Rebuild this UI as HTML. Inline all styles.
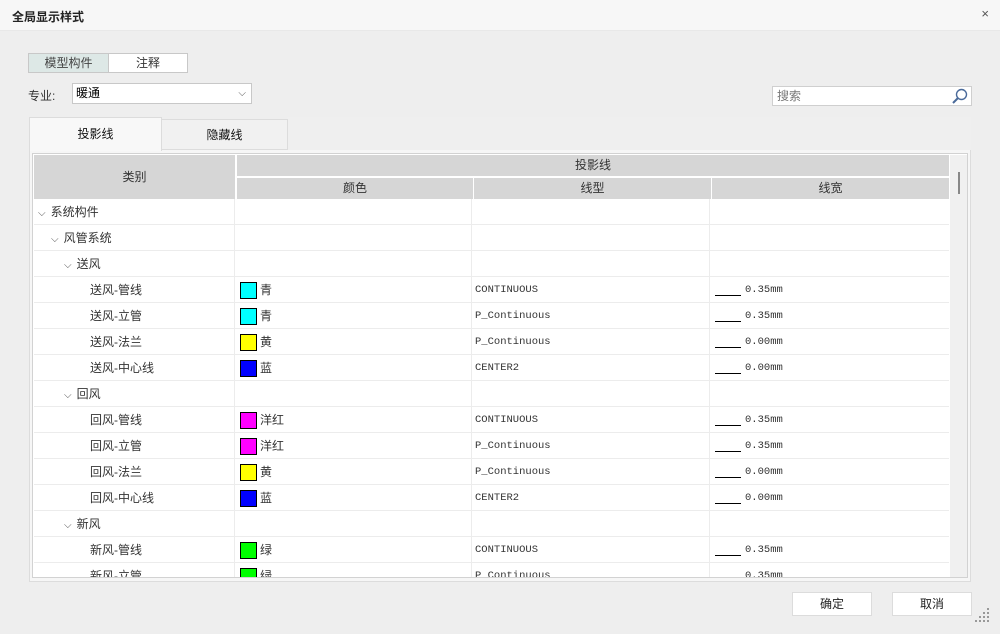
<!DOCTYPE html>
<html><head><meta charset="utf-8"><style>
*{margin:0;padding:0;box-sizing:border-box}
body{width:1000px;height:634px;overflow:hidden;background:#eeeeee;font-family:"Liberation Sans","Noto Sans CJK SC",sans-serif;font-size:12px;color:#333;position:relative}
.a{position:absolute}
.title{left:0;top:0;width:1000px;height:31px;background:#f7f7f7;border-bottom:1px solid #e8e8e8}
.row{position:absolute;left:34px;width:915px;height:26px;background:#fff;border-bottom:1px solid #ececec}
.row div{position:absolute;top:0;height:26px;line-height:26px;white-space:nowrap}
.c1{left:0;width:201px;border-right:1px solid #ececec}
.c2{left:201px;width:237px;border-right:1px solid #ececec}
.c3{left:438px;width:238px;border-right:1px solid #ececec;font-family:"Liberation Mono",monospace;font-size:10.5px;padding-left:3px}
.c4{left:676px;width:239px;font-family:"Liberation Mono",monospace;font-size:10.5px;padding-left:35px}
.c4 i{position:absolute;left:5px;top:18px;width:26px;border-top:1px solid #000}
.sw{position:absolute;left:5px;top:5px;width:17px;height:17px;border:1px solid #000}
.cn{padding-left:25px}
.chev{font-size:10px;color:#555;margin-right:5px}
.hd{position:absolute;background:#d6d6d6;text-align:center;color:#333;font-size:12px}
</style></head><body>
<div class="a title"><span class="a" style="left:12px;top:8px;font-weight:bold;font-size:12px;color:#222">全局显示样式</span><span class="a" style="right:11px;top:6px;font-size:13px;color:#555">×</span></div>
<div class="a" style="left:28px;top:53px;width:81px;height:20px;background:#dde8e6;border:1px solid #c8c8c8;text-align:center;line-height:18px;color:#444">模型构件</div>
<div class="a" style="left:108px;top:53px;width:80px;height:20px;background:#fff;border:1px solid #c8c8c8;text-align:center;line-height:18px">注释</div>
<div class="a" style="left:28px;top:87px">专业:</div>
<div class="a" style="left:72px;top:83px;width:180px;height:21px;background:#fff;border:1px solid #c8c8c8;line-height:19px;padding-left:3px;color:#000">暖通<span class="a" style="right:5px;top:0;font-size:10px;color:#555">⌵</span></div>
<div class="a" style="left:772px;top:86px;width:200px;height:20px;background:#fff;border:1px solid #cfcfcf;line-height:18px;padding-left:4px;color:#777">搜索
<svg class="a" style="right:3px;top:1px" width="17" height="17" viewBox="0 0 17 17"><circle cx="10.5" cy="6.5" r="5" fill="none" stroke="#4a6a9a" stroke-width="1.4"/><path d="M7 10 L2 15" stroke="#4a6a9a" stroke-width="2"/></svg></div>
<div class="a" style="left:29px;top:149px;width:942px;height:433px;background:#f6f6f6;border:1px solid #dcdcdc"></div>
<div class="a" style="left:287px;top:117px;width:684px;height:33px;background:#efefef"></div>
<div class="a" style="left:29px;top:117px;width:133px;height:34px;background:#f8f8f8;border:1px solid #dcdcdc;border-bottom:none;text-align:center;line-height:32px;color:#111">投影线</div>
<div class="a" style="left:161px;top:119px;width:127px;height:31px;background:#f1f1f1;border:1px solid #dcdcdc;text-align:center;line-height:30px;color:#111">隐藏线</div>
<div class="a" style="left:32px;top:153px;width:936px;height:425px;background:#fff;border:1px solid #d2d2d2;overflow:hidden">
<div class="hd" style="left:1px;top:1px;width:201px;height:44px;line-height:44px">类别</div>
<div class="hd" style="left:204px;top:1px;width:712px;height:21px;line-height:21px">投影线</div>
<div class="hd" style="left:204px;top:24px;width:236px;height:21px;line-height:21px">颜色</div>
<div class="hd" style="left:441px;top:24px;width:237px;height:21px;line-height:21px">线型</div>
<div class="hd" style="left:679px;top:24px;width:237px;height:21px;line-height:21px">线宽</div>
<div class="a" style="left:917px;top:1px;width:18px;height:423px;background:#f0f0f0"></div>
<div class="a" style="left:925px;top:18px;width:2px;height:22px;background:#888"></div>
</div>
<div class="a" style="left:0;top:0;width:1000px;height:634px;pointer-events:none">
<div style="position:absolute;left:0;top:199px;width:1000px;height:378px;overflow:hidden">
<div class="row" style="top:0"><div class="c1" style="padding-left:4px"><span class="chev">⌵</span>系统构件</div><div class="c2"></div><div class="c3"></div><div class="c4"></div></div>
<div class="row" style="top:26px"><div class="c1" style="padding-left:17px"><span class="chev">⌵</span>风管系统</div><div class="c2"></div><div class="c3"></div><div class="c4"></div></div>
<div class="row" style="top:52px"><div class="c1" style="padding-left:30px"><span class="chev">⌵</span>送风</div><div class="c2"></div><div class="c3"></div><div class="c4"></div></div>
<div class="row" style="top:78px"><div class="c1" style="padding-left:56px">送风-管线</div><div class="c2 cn"><span class="sw" style="background:#00ffff"></span>青</div><div class="c3">CONTINUOUS</div><div class="c4"><i></i>0.35mm</div></div>
<div class="row" style="top:104px"><div class="c1" style="padding-left:56px">送风-立管</div><div class="c2 cn"><span class="sw" style="background:#00ffff"></span>青</div><div class="c3">P_Continuous</div><div class="c4"><i></i>0.35mm</div></div>
<div class="row" style="top:130px"><div class="c1" style="padding-left:56px">送风-法兰</div><div class="c2 cn"><span class="sw" style="background:#ffff00"></span>黄</div><div class="c3">P_Continuous</div><div class="c4"><i></i>0.00mm</div></div>
<div class="row" style="top:156px"><div class="c1" style="padding-left:56px">送风-中心线</div><div class="c2 cn"><span class="sw" style="background:#0000ff"></span>蓝</div><div class="c3">CENTER2</div><div class="c4"><i></i>0.00mm</div></div>
<div class="row" style="top:182px"><div class="c1" style="padding-left:30px"><span class="chev">⌵</span>回风</div><div class="c2"></div><div class="c3"></div><div class="c4"></div></div>
<div class="row" style="top:208px"><div class="c1" style="padding-left:56px">回风-管线</div><div class="c2 cn"><span class="sw" style="background:#ff00ff"></span>洋红</div><div class="c3">CONTINUOUS</div><div class="c4"><i></i>0.35mm</div></div>
<div class="row" style="top:234px"><div class="c1" style="padding-left:56px">回风-立管</div><div class="c2 cn"><span class="sw" style="background:#ff00ff"></span>洋红</div><div class="c3">P_Continuous</div><div class="c4"><i></i>0.35mm</div></div>
<div class="row" style="top:260px"><div class="c1" style="padding-left:56px">回风-法兰</div><div class="c2 cn"><span class="sw" style="background:#ffff00"></span>黄</div><div class="c3">P_Continuous</div><div class="c4"><i></i>0.00mm</div></div>
<div class="row" style="top:286px"><div class="c1" style="padding-left:56px">回风-中心线</div><div class="c2 cn"><span class="sw" style="background:#0000ff"></span>蓝</div><div class="c3">CENTER2</div><div class="c4"><i></i>0.00mm</div></div>
<div class="row" style="top:312px"><div class="c1" style="padding-left:30px"><span class="chev">⌵</span>新风</div><div class="c2"></div><div class="c3"></div><div class="c4"></div></div>
<div class="row" style="top:338px"><div class="c1" style="padding-left:56px">新风-管线</div><div class="c2 cn"><span class="sw" style="background:#00ff00"></span>绿</div><div class="c3">CONTINUOUS</div><div class="c4"><i></i>0.35mm</div></div>
<div class="row" style="top:364px"><div class="c1" style="padding-left:56px">新风-立管</div><div class="c2 cn"><span class="sw" style="background:#00ff00"></span>绿</div><div class="c3">P_Continuous</div><div class="c4"><i></i>0.35mm</div></div>
</div></div>
<div class="a" style="left:792px;top:592px;width:80px;height:24px;background:#fff;border:1px solid #dcdcdc;text-align:center;line-height:22px;color:#222">确定</div>
<div class="a" style="left:892px;top:592px;width:80px;height:24px;background:#fff;border:1px solid #dcdcdc;text-align:center;line-height:22px;color:#222">取消</div>
<svg class="a" style="left:975px;top:606px" width="16" height="20" viewBox="0 0 16 20"><g fill="#999"><rect x="12" y="2" width="2" height="2"/><rect x="8" y="6" width="2" height="2"/><rect x="12" y="6" width="2" height="2"/><rect x="4" y="10" width="2" height="2"/><rect x="8" y="10" width="2" height="2"/><rect x="12" y="10" width="2" height="2"/><rect x="0" y="14" width="2" height="2"/><rect x="4" y="14" width="2" height="2"/><rect x="8" y="14" width="2" height="2"/><rect x="12" y="14" width="2" height="2"/></g></svg>
</body></html>
